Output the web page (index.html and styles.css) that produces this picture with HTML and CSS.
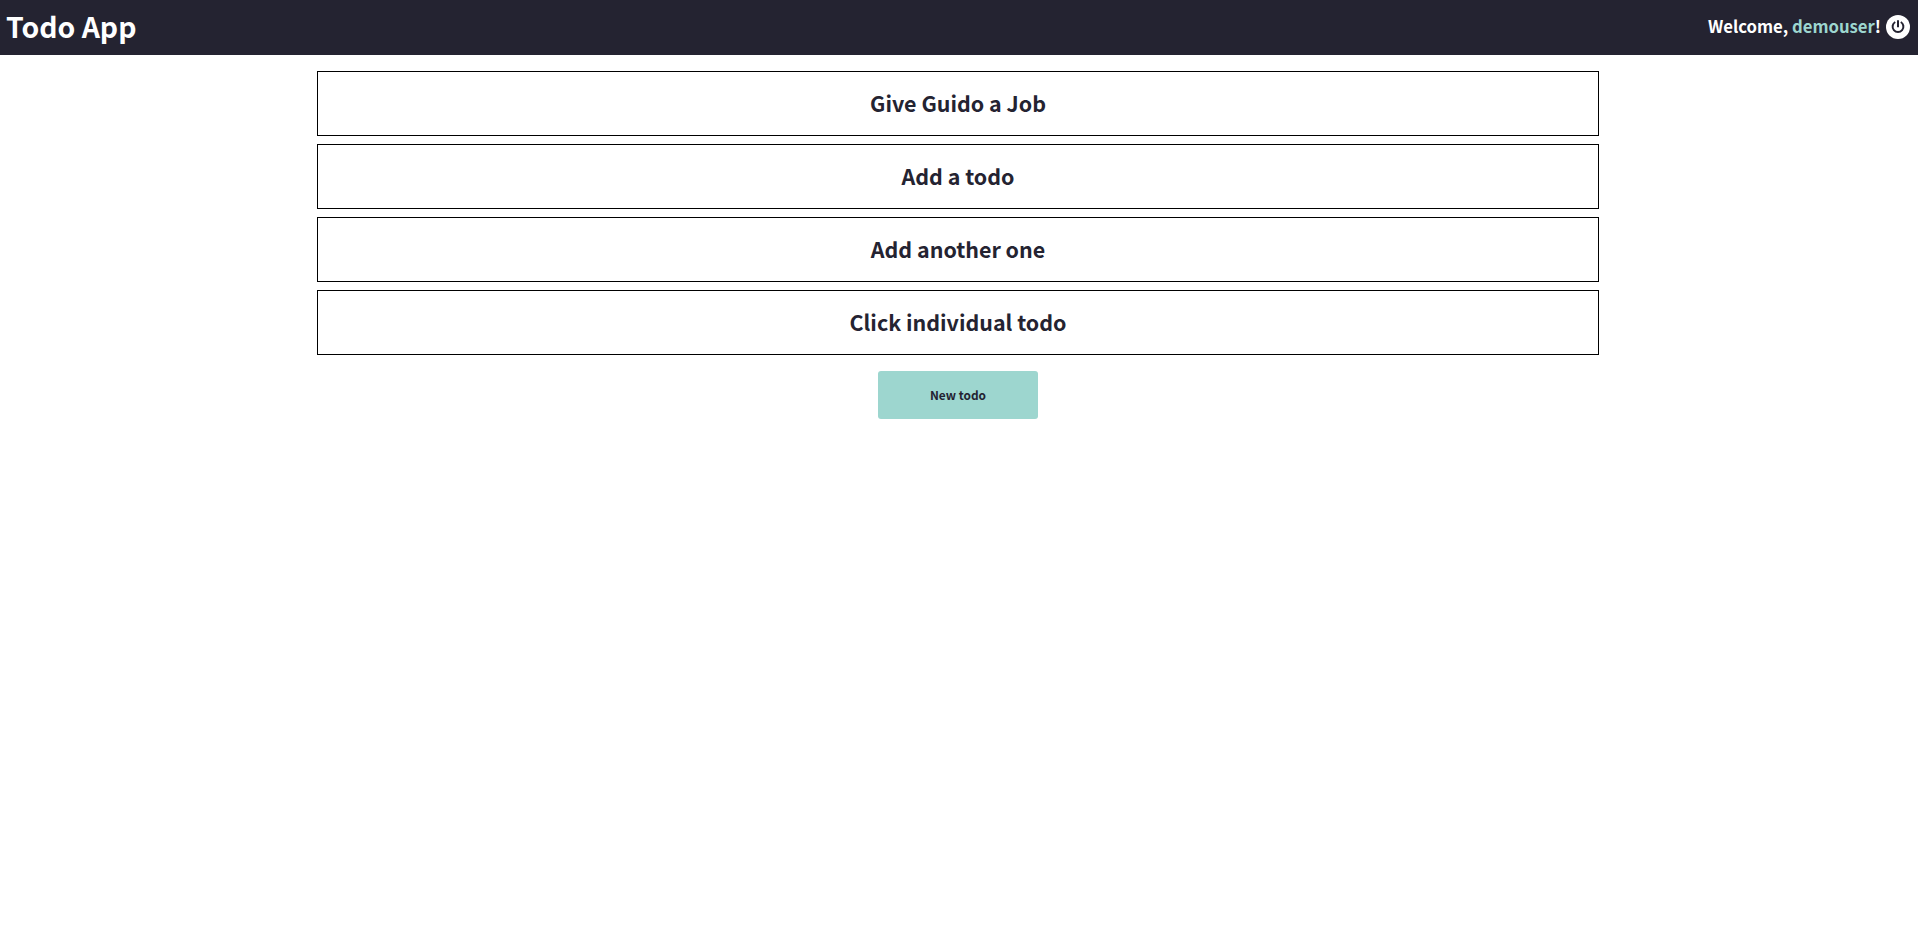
FILE: index.html
```html
<!DOCTYPE html>
<html lang="en">
<head>
<meta charset="utf-8">
<title>Todo App</title>
<link rel="stylesheet" href="styles.css">
</head>
<body>
<header class="header">
  <h1 class="brand">Todo App</h1>
  <div class="account">
    <p class="welcome">Welcome, <span class="username">demouser</span>!</p>
    <button class="logout" aria-label="Log out">
      <svg class="power" viewBox="0 0 24 24" width="24" height="24"><path d="M9.2 7A5.4 5.4 0 1 0 14.8 7M12 5.2V12.2"/></svg>
    </button>
  </div>
</header>
<main class="content">
  <ul class="todos">
    <li class="todo">Give Guido a Job</li>
    <li class="todo">Add a todo</li>
    <li class="todo">Add another one</li>
    <li class="todo">Click individual todo</li>
  </ul>
  <button class="new-todo">New todo</button>
</main>
</body>
</html>
```
FILE: styles.css
```css
* {
  box-sizing: border-box;
  margin: 0;
  padding: 0;
}

body {
  background: #fff;
  color: #242331;
  font-family: "Source Sans Pro", "Noto Sans CJK JP", sans-serif;
  font-weight: 700;
}

.header {
  display: flex;
  align-items: flex-start;
  justify-content: space-between;
  height: 55px;
  padding: 0 8px 0 6px;
  background: #242331;
  color: #fff;
}

.brand {
  font-size: 28.4px;
  line-height: 52px;
}

.account {
  display: flex;
  align-items: flex-start;
  gap: 5px;
}

.welcome {
  font-size: 16.7px;
  line-height: 53px;
}

.username {
  color: #9dd6cf;
}

.logout {
  width: 24px;
  height: 24px;
  margin-top: 15px;
  border: 0;
  border-radius: 50%;
  background: #fff;
}

.power {
  display: block;
  fill: none;
  stroke: #242331;
  stroke-width: 2;
}

.content {
  display: flex;
  flex-direction: column;
  align-items: center;
  padding-top: 16px;
}

.todos {
  display: flex;
  flex-direction: column;
  gap: 8px;
  width: 1282px;
  margin-right: 2px;
  list-style: none;
}

.todo {
  height: 65px;
  border: 1px solid #000;
  font-size: 21.45px;
  line-height: 61px;
  text-align: center;
}

.new-todo {
  width: 160px;
  height: 48px;
  margin: 16px 2px 0 0;
  padding-bottom: 2px;
  border: 0;
  border-radius: 3px;
  background: #9dd6cf;
  color: #242331;
  font: inherit;
  font-size: 11.9px;
}
```
